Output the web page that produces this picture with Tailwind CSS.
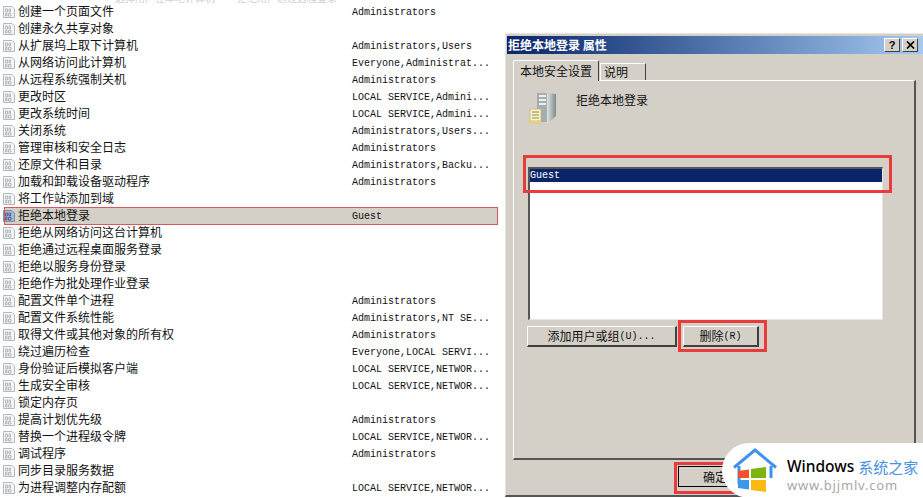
<!DOCTYPE html>
<html lang="zh-CN">
<head>
  <meta charset="UTF-8" />
  <title>拒绝本地登录 属性</title>
  <script src="https://cdn.jsdelivr.net/npm/@tailwindcss/browser@4"></script>
</head>
<body class="bg-white">
  <svg width="0" height="0" class="absolute">
    <symbol id="policy" viewBox="0 0 14 14">
      <path d="M1.5 1.5H10L12.5 4V12.5H1.5Z" fill="#f6f6f4" stroke="#b4b9be"/>
      <path d="M3.5 4h2v3h-2zM7 4h1.5v3H7zM3.5 8.5H5V11H3.5zM6.5 8.5h2.500V11h-2.500z" fill="none" stroke="#a9b3bd" stroke-width=".9"/>
    </symbol>
    <symbol id="policy-selected" viewBox="0 0 14 14">
      <path d="M1.5 1.5H10L12.5 4V12.500H1.500Z" fill="#aab6d0" stroke="#7f8fb4"/>
      <path d="M3.5 4h2v3h-2zM7 4h1.5v3H7zM3.5 8.5H5V11H3.5zM6.5 8.5h2.500V11h-2.500z" fill="none" stroke="#46598f" stroke-width=".9"/>
    </symbol>
    <linearGradient id="towerSide" x1="0" y1="0" x2="1" y2="0">
      <stop offset="0" stop-color="#dfe3e3"/>
      <stop offset="1" stop-color="#7f8b8b"/>
    </linearGradient>
  </svg>

  <div class="relative flex w-[923px] h-[498px] overflow-hidden bg-white font-['Noto_Sans_CJK_SC',sans-serif] text-[12px] text-[#111]">

    <!-- policy list -->
    <div class="w-[505px] shrink-0 flex flex-col">
      <div class="h-[3px] shrink-0 overflow-hidden flex gap-[22px] pl-[115px] text-[10px] leading-[10px] text-[#d0d0d0]">
        <span class="-mt-[7px]">选择用户在本地计算机</span>
        <span class="-mt-[7px]">拒绝用户通过远程登录</span>
      </div>
      <div id="rows" class="flex flex-col shrink-0"></div>
    </div>

    <!-- properties dialog -->
    <div class="relative w-[418px] h-[464px] mt-[33px] flex flex-col bg-[#d4d0c8] border-t border-l border-t-[#e8e6e1] border-l-[#e8e6e1] border-b-2 border-b-[#555]">
      <div class="h-[18px] mt-[2px] ml-px flex items-center justify-between bg-gradient-to-r from-[#0a246a] to-[#a6caf0] pl-[1px] pr-[5px] text-white font-bold">
        <span class="whitespace-pre">拒绝本地登录 属性</span>
        <div class="flex gap-[2px]">
          <div class="w-[16px] h-[14px] flex items-center justify-center bg-[#d4d0c8] border border-t-white border-l-white border-r-[#404040] border-b-[#404040] text-black text-[11px] font-bold font-['Liberation_Sans',sans-serif]">?</div>
          <div class="w-[16px] h-[14px] flex items-center justify-center bg-[#d4d0c8] border border-t-white border-l-white border-r-[#404040] border-b-[#404040]">
            <svg width="9" height="8" viewBox="0 0 9 8"><path d="M1 0.500L8 7.500M8 0.500L1 7.500" stroke="#000" stroke-width="1.700"/></svg>
          </div>
        </div>
      </div>

      <!-- tabs -->
      <div class="flex items-end h-[26px] pl-[7px]">
        <div class="w-[86px] h-[21px] -mb-px z-10 flex items-center justify-center bg-[#d4d0c8] border-t border-l border-t-white border-l-white border-r border-r-[#404040] rounded-t-[2px]">本地安全设置</div>
        <div class="w-[46px] h-[17px] ml-px flex items-center pl-[3px] border-t border-l border-r border-t-white border-l-white border-r-[#404040]">说明</div>
      </div>

      <!-- panel -->
      <div class="ml-[7px] w-[403px] h-[380px] flex flex-col border-t border-l border-t-white border-l-white border-r-2 border-r-[#555] border-b-2 border-b-[#555] pl-[13px]">
        <div class="flex h-[86px] pt-[11px]">
          <svg width="32" height="34" viewBox="0 0 32 34" class="shrink-0">
            <path d="M10 1H20V30H10Z" fill="#a4adb0"/>
            <path d="M20 1L29 2V24L20 32Z" fill="url(#towerSide)"/>
            <path d="M12 3H19V5H12ZM12 7H19V9H12ZM12 11H19V13H12Z" fill="#eef0f0"/>
            <path d="M3 17H14V29H3Z" fill="#fbf3c4" stroke="#c4b47a" stroke-width=".8"/>
            <path d="M5 20H12M5 23H12M5 26H12" stroke="#8b8464"/>
            <path d="M1 29H14V32H1Z" fill="#e3cf87"/>
          </svg>
          <span class="ml-[17px] -mt-[1px] leading-[18px]">拒绝本地登录</span>
        </div>
        <div class="ml-px w-[355px] h-[153px] bg-white border-t-2 border-l-2 border-t-[#555] border-l-[#555] border-r border-b border-r-[#e8e6e1] border-b-[#e8e6e1]">
          <div class="h-[13px] flex items-center bg-[#0a246a] text-white font-['Liberation_Mono',monospace] text-[10px]">Guest</div>
        </div>
        <div class="flex gap-[6px] mt-[6px]">
          <div class="w-[150px] h-[21px] flex items-center justify-center bg-[#d4d0c8] border border-t-white border-l-white border-r-2 border-b-2 border-r-[#404040] border-b-[#404040]">添加用户或组<span class="font-['Liberation_Mono',monospace] text-[10px]">(U)...</span></div>
          <div class="w-[76px] h-[21px] flex items-center justify-center bg-[#d4d0c8] border border-t-white border-l-white border-r-2 border-b-2 border-r-[#404040] border-b-[#404040]">删除<span class="font-['Liberation_Mono',monospace] text-[10px]">(R)</span></div>
        </div>
      </div>

      <!-- footer -->
      <div class="flex pl-[172px] pt-[6px]">
        <div class="w-[74px] h-[21px] flex items-center justify-center bg-[#d4d0c8] border border-black">确定</div>
      </div>

      <!-- red annotation boxes -->
      <div class="absolute left-[17px] top-[121px] w-[369px] h-[38px] border-[3px] border-[#e83c3c]"></div>
      <div class="absolute left-[172px] top-[286px] w-[89px] h-[32px] border-[3px] border-[#e83c3c]"></div>
      <div class="absolute left-[168px] top-[428px] w-[90px] h-[32px] border-[3px] border-[#e83c3c]"></div>
    </div>

    <!-- selected row outline -->
    <div class="absolute left-[4px] top-[207px] w-[494px] h-[18px] border border-[#d9585c]"></div>

    <!-- watermark -->
    <div class="absolute right-0 bottom-0 w-[201px] h-[55px] rounded-l-[34px] bg-white flex items-start pl-[11px] pt-[5px]">
      <svg width="46" height="46" viewBox="0 0 46 46" class="shrink-0 -ml-px">
        <path d="M2 19.500L23 2L44 19.500M7 18V36M39 18V30" fill="none" stroke="#3f93ea" stroke-width="3"/>
        <path d="M6 23L17 21.500V30H6Z" fill="#f0532b"/>
        <path d="M19 21L34 19V30H19Z" fill="#7cb60c"/>
        <path d="M6 32H17V41.500L6 40Z" fill="#3b97ea"/>
        <path d="M19 32H34V44L19 42Z" fill="#fdb913"/>
      </svg>
      <div class="ml-[9px] mt-[8px] flex flex-col">
        <div class="flex items-center h-[21px] gap-[4px]">
          <span class="font-['Noto_Sans',sans-serif] font-medium text-[15.5px] leading-[21px] text-black">Windows</span>
          <span class="text-[15px] leading-[21px] text-[#4a90e2]">系统之家</span>
        </div>
        <span class="font-['Noto_Sans',sans-serif] text-[13px] leading-[16px] tracking-[0.8px] text-[#a8a8a8]">www.bjjmlv.com</span>
      </div>
    </div>
  </div>

  <script>
    const A = "Administrators";
    const L = "LOCAL SERVICE,NETWOR...";
    const M = "LOCAL SERVICE,Admini...";
    const rows = [
      ["创建一个页面文件", A], ["创建永久共享对象", ""], ["从扩展坞上取下计算机", "Administrators,Users"],
      ["从网络访问此计算机", "Everyone,Administrat..."], ["从远程系统强制关机", A], ["更改时区", M],
      ["更改系统时间", M], ["关闭系统", "Administrators,Users..."], ["管理审核和安全日志", A],
      ["还原文件和目录", "Administrators,Backu..."], ["加载和卸载设备驱动程序", A], ["将工作站添加到域", ""],
      ["拒绝本地登录", "Guest"], ["拒绝从网络访问这台计算机", ""], ["拒绝通过远程桌面服务登录", ""],
      ["拒绝以服务身份登录", ""], ["拒绝作为批处理作业登录", ""], ["配置文件单个进程", A],
      ["配置文件系统性能", "Administrators,NT SE..."], ["取得文件或其他对象的所有权", A], ["绕过遍历检查", "Everyone,LOCAL SERVI..."],
      ["身份验证后模拟客户端", L], ["生成安全审核", L], ["锁定内存页", ""],
      ["提高计划优先级", A], ["替换一个进程级令牌", L], ["调试程序", A],
      ["同步目录服务数据", ""], ["为进程调整内存配额", L], ["", ""]
    ];
    document.getElementById("rows").innerHTML = rows.map(([name, who]) => {
      const selected = name === "拒绝本地登录";
      return `<div class="h-[17px] flex items-center shrink-0 ${selected ? "ml-[5px] w-[492px] bg-[#d4d0c8]" : "pl-[2px]"}">
        <svg width="14" height="14" class="shrink-0 ${selected ? "-ml-[3px]" : ""}"><use href="${selected ? "#policy-selected" : "#policy"}"></use></svg>
        <span class="ml-[2px] w-[334px] h-[17px] pb-[2px] shrink-0 leading-[15px] whitespace-nowrap">${name}</span>
        <span class="h-[17px] pt-[2px] font-['Liberation_Mono',monospace] text-[10px] leading-[15px] whitespace-pre">${who}</span>
      </div>`;
    }).join("");
  </script>
</body>
</html>
